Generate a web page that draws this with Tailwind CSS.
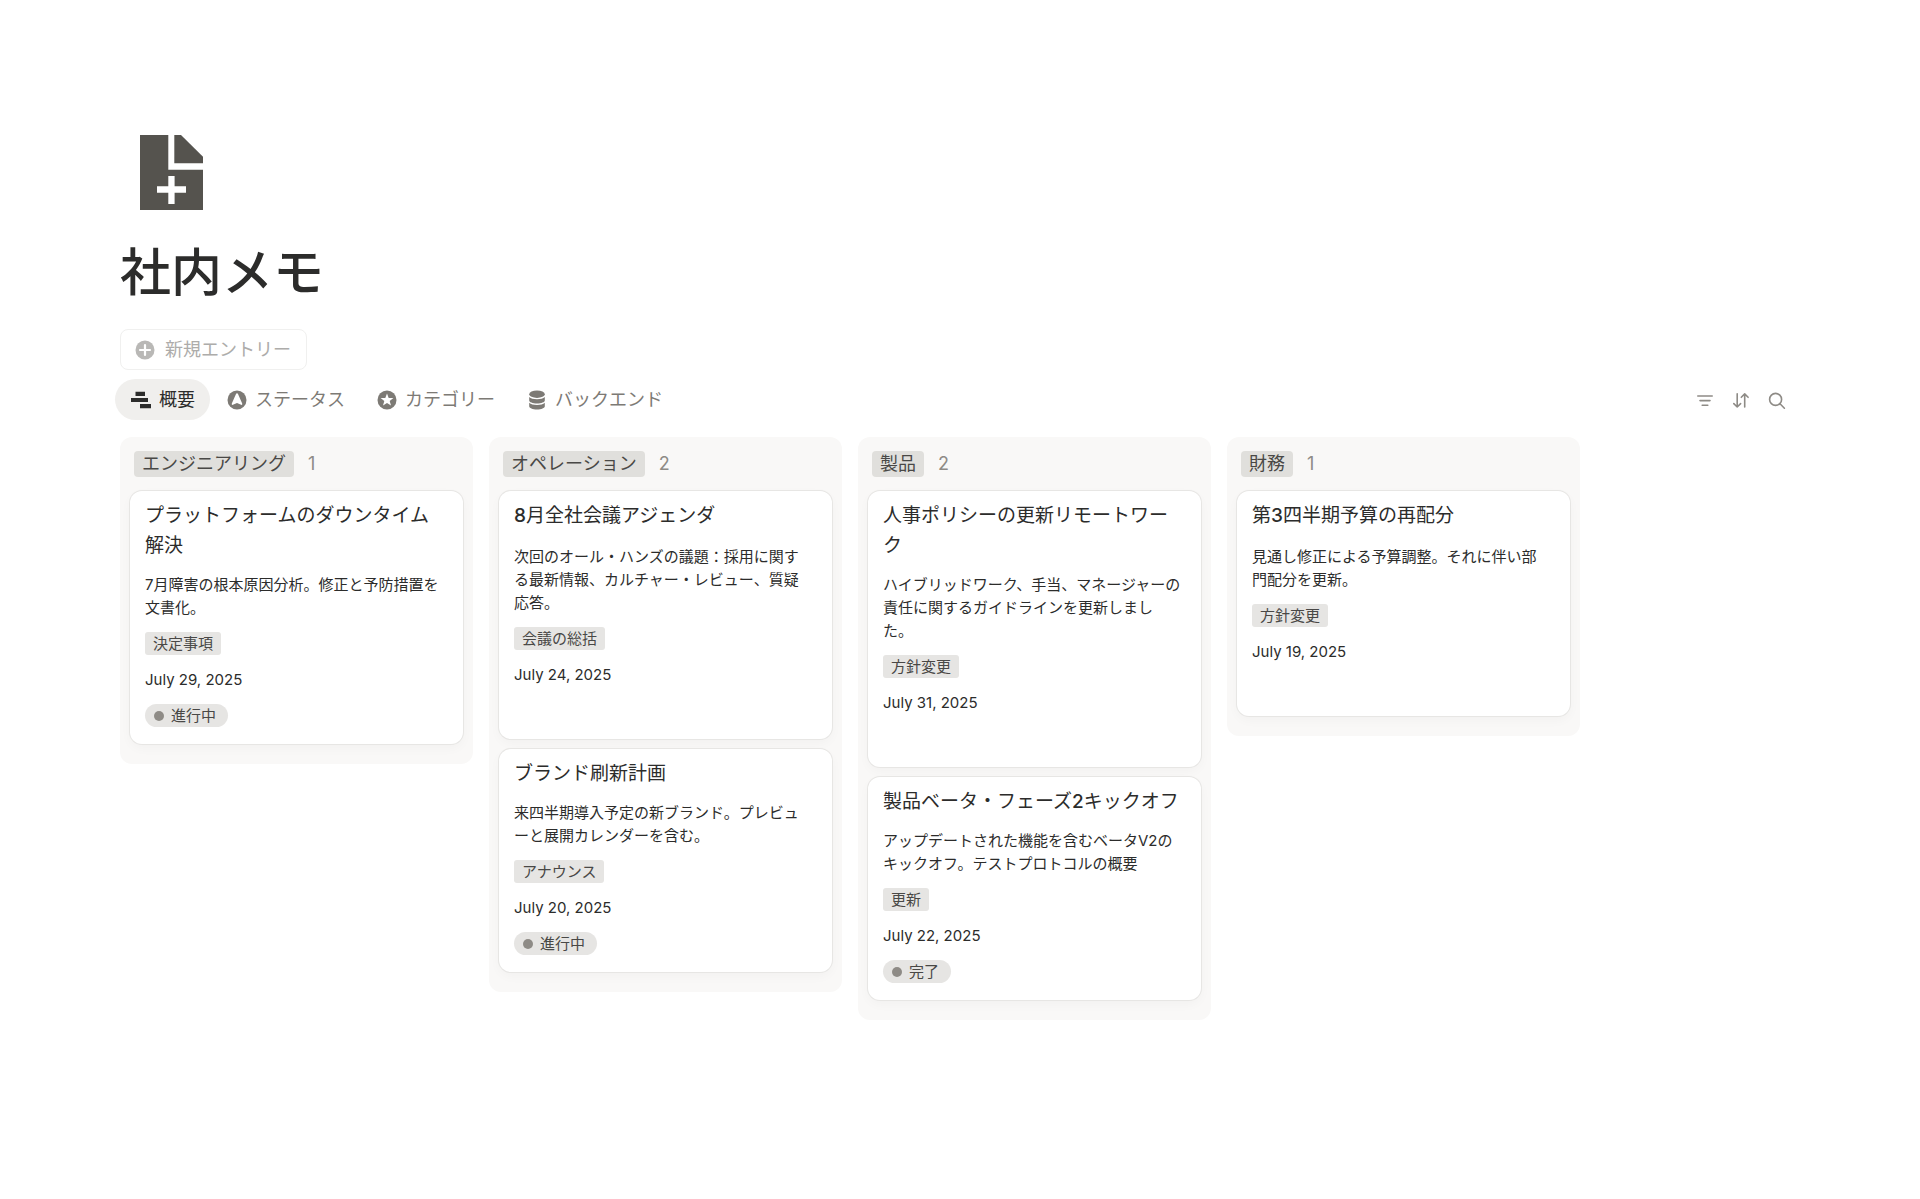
<!DOCTYPE html>
<html lang="ja">
<head>
    <meta charset="UTF-8">
    <meta name="viewport" content="width=device-width, initial-scale=1.0">
    <title>社内メモ</title>
    <script src="https://cdn.jsdelivr.net/npm/@tailwindcss/browser@4"></script>
</head>
<body class="bg-white text-[#2c2c2b] font-['Inter','Noto_Sans_CJK_JP',sans-serif]">
    <main class="px-[120px] pt-[135px] pb-20">
        <svg class="ml-5 w-[63px] h-[75px]" viewBox="0 0 63 75" fill="#55534e" aria-hidden="true">
            <path fill-rule="evenodd" d="M0 0H28.3V34.7H63V75H0ZM28.3 41V51.3H17V57.7H28.3V69H34.6V57.7H46V51.3H34.6V41Z"/>
            <path d="M34.3 0H41L63 21.7V28.3H34.3Z"/>
        </svg>

        <h1 class="mt-[33px] text-[51px] leading-[60px] font-medium">社内メモ</h1>

        <button type="button" class="mt-[26px] h-[41px] flex items-center gap-[10px] pl-[14px] pr-[15px] border border-[#f0f0ef] rounded-lg text-lg text-[#adacaa]">
            <svg class="size-5" viewBox="0 0 20 20" aria-hidden="true">
                <circle cx="10" cy="10" r="9.5" fill="#b9b8b6"/>
                <path d="M10 5V15M5 10H15" stroke="#fff" stroke-width="2.2" stroke-linecap="round"/>
            </svg>
            新規エントリー
        </button>

        <div class="mt-[9px] flex items-center justify-between">
            <nav class="-ml-[5px] flex gap-px text-lg text-[#7d7a75]">
                <a href="#" class="h-[41px] flex items-center gap-2 pl-4 pr-[15px] rounded-full bg-[#f0efed] text-[#2c2c2b]">
                    <svg class="size-5" viewBox="0 0 20 20" fill="currentColor" aria-hidden="true">
                        <path d="M4.5 1.8H14V6H4.5ZM0 8H17V12H0ZM9 14H20V18.2H9Z"/>
                    </svg>
                    概要
                </a>
                <a href="#" class="h-[41px] flex items-center gap-2 pl-4 pr-[15px] rounded-full">
                    <svg class="size-5" viewBox="0 0 20 20" aria-hidden="true">
                        <circle cx="10" cy="10" r="9.5" fill="currentColor"/>
                        <path d="M10 3.2Q10.7 3.2 11 4L15.2 13.6Q15.6 15.2 14.1 14.8L10 13.1L5.9 14.8Q4.4 15.2 4.8 13.6L9 4Q9.3 3.2 10 3.2Z" fill="#fff"/>
                    </svg>
                    ステータス
                </a>
                <a href="#" class="h-[41px] flex items-center gap-2 pl-4 pr-[15px] rounded-full">
                    <svg class="size-5" viewBox="0 0 20 20" aria-hidden="true">
                        <circle cx="10" cy="10" r="9.5" fill="currentColor"/>
                        <path d="M10 3.4L11.7 8H16.4L12.7 10.9L14 15.6L10 12.9L6 15.6L7.3 10.9L3.6 8H8.3Z" fill="#fff"/>
                    </svg>
                    カテゴリー
                </a>
                <a href="#" class="h-[41px] flex items-center gap-2 pl-4 pr-[15px] rounded-full">
                    <svg class="size-5" viewBox="0 0 20 20" fill="currentColor" aria-hidden="true">
                        <ellipse cx="10" cy="4.2" rx="7.8" ry="3.7"/>
                        <path d="M2.2 7Q4.6 9.2 10 9.2T17.8 7V10.6C17.8 12.2 14.4 13.6 10 13.6S2.2 12.2 2.2 10.6Z"/>
                        <path d="M2.2 12.8Q4.6 15 10 15T17.8 12.8V16.2C17.8 18 14.4 19.5 10 19.5S2.2 18 2.2 16.2Z"/>
                    </svg>
                    バックエンド
                </a>
            </nav>
            <div class="mr-[5px] mt-[3px] flex text-[#8e8b86]">
                <button type="button" aria-label="フィルター" class="size-9 flex items-center justify-center">
                    <svg class="size-5" viewBox="0 0 20 20" fill="none" stroke="currentColor" stroke-width="1.6" stroke-linecap="round" aria-hidden="true">
                        <path d="M2.8 5H17.2M5 9.6H15M7.2 14.2H12.8"/>
                    </svg>
                </button>
                <button type="button" aria-label="並べ替え" class="size-9 flex items-center justify-center">
                    <svg class="size-5" viewBox="0 0 20 20" fill="none" stroke="currentColor" stroke-width="1.6" stroke-linecap="round" stroke-linejoin="round" aria-hidden="true">
                        <path d="M6.2 2.8V16M2.8 12.6L6.2 16L9.6 12.6M13.7 16V2.9M10.3 6.3L13.7 2.9L17.1 6.3"/>
                    </svg>
                </button>
                <button type="button" aria-label="検索" class="size-9 flex items-center justify-center">
                    <svg class="size-5" viewBox="0 0 20 20" fill="none" stroke="currentColor" stroke-width="1.6" stroke-linecap="round" aria-hidden="true">
                        <circle cx="8.6" cy="8.4" r="6"/>
                        <path d="M13 12.8L17.4 17.2"/>
                    </svg>
                </button>
            </div>
        </div>

        <div class="mt-[17px] flex items-start gap-4">
            <!-- エンジニアリング -->
            <section class="w-[353px] shrink-0 rounded-xl bg-[#f9f8f7] px-[10px] pt-[14px] pb-5">
                <header class="pl-1 mb-[14px] flex items-center gap-[14px] text-lg leading-[26px]">
                    <h2 class="h-[26px] px-2 rounded bg-[#e0dfdc] text-[#494846]">エンジニアリング</h2>
                    <span class="text-[#8e8b86]">1</span>
                </header>
                <div class="flex flex-col gap-[10px]">
                    <article class="flex flex-col items-start gap-3 rounded-xl bg-white px-[15px] pt-[10px] pb-[17px] shadow-[0_0_0_1px_#e7e6e4,0_4px_12px_rgba(25,25,25,0.03)]">
                        <h3 class="text-[19px] leading-[30px]">プラットフォームのダウンタイム<br>解決</h3>
                        <p class="text-[15px] leading-[23px] whitespace-nowrap">7月障害の根本原因分析。修正と予防措置を<br>文書化。</p>
                        <span class="mt-px h-[23px] px-2 rounded-[3px] bg-[#e6e5e3] text-[15px] leading-[23px] text-[#494846]">決定事項</span>
                        <time class="mt-px h-[23px] text-[15px] leading-[23px]">July 29, 2025</time>
                        <span class="mt-px h-[23px] flex items-center gap-[7px] pl-[9px] pr-3 rounded-full bg-[#e6e5e3] text-[15px] leading-[23px] text-[#494846]"><i class="size-[10px] rounded-full bg-[#8e8b86]"></i>進行中</span>
                    </article>
                </div>
            </section>

            <!-- オペレーション -->
            <section class="w-[353px] shrink-0 rounded-xl bg-[#f9f8f7] px-[10px] pt-[14px] pb-5">
                <header class="pl-1 mb-[14px] flex items-center gap-[14px] text-lg leading-[26px]">
                    <h2 class="h-[26px] px-2 rounded bg-[#e0dfdc] text-[#494846]">オペレーション</h2>
                    <span class="text-[#8e8b86]">2</span>
                </header>
                <div class="flex flex-col gap-[10px]">
                    <article class="flex flex-col items-start gap-3 rounded-xl bg-white px-[15px] pt-[10px] pb-[17px] shadow-[0_0_0_1px_#e7e6e4,0_4px_12px_rgba(25,25,25,0.03)]">
                        <h3 class="min-h-8 text-[19px] leading-[30px]"><span class="font-medium">8</span>月全社会議アジェンダ</h3>
                        <p class="text-[15px] leading-[23px] whitespace-nowrap">次回のオール・ハンズの議題：採用に関す<br>る最新情報、カルチャー・レビュー、質疑<br>応答。</p>
                        <span class="mt-px h-[23px] px-2 rounded-[3px] bg-[#e6e5e3] text-[15px] leading-[23px] text-[#494846]">会議の総括</span>
                        <time class="mt-px h-[23px] text-[15px] leading-[23px]">July 24, 2025</time>
                        <span class="mt-px h-[23px]"></span>
                    </article>
                    <article class="flex flex-col items-start gap-3 rounded-xl bg-white px-[15px] pt-[10px] pb-[17px] shadow-[0_0_0_1px_#e7e6e4,0_4px_12px_rgba(25,25,25,0.03)]">
                        <h3 class="text-[19px] leading-[30px]">ブランド刷新計画</h3>
                        <p class="text-[15px] leading-[23px] whitespace-nowrap">来四半期導入予定の新ブランド。プレビュ<br>ーと展開カレンダーを含む。</p>
                        <span class="mt-px h-[23px] px-2 rounded-[3px] bg-[#e6e5e3] text-[15px] leading-[23px] text-[#494846]">アナウンス</span>
                        <time class="mt-px h-[23px] text-[15px] leading-[23px]">July 20, 2025</time>
                        <span class="mt-px h-[23px] flex items-center gap-[7px] pl-[9px] pr-3 rounded-full bg-[#e6e5e3] text-[15px] leading-[23px] text-[#494846]"><i class="size-[10px] rounded-full bg-[#8e8b86]"></i>進行中</span>
                    </article>
                </div>
            </section>

            <!-- 製品 -->
            <section class="w-[353px] shrink-0 rounded-xl bg-[#f9f8f7] px-[10px] pt-[14px] pb-5">
                <header class="pl-1 mb-[14px] flex items-center gap-[14px] text-lg leading-[26px]">
                    <h2 class="h-[26px] px-2 rounded bg-[#e0dfdc] text-[#494846]">製品</h2>
                    <span class="text-[#8e8b86]">2</span>
                </header>
                <div class="flex flex-col gap-[10px]">
                    <article class="flex flex-col items-start gap-3 rounded-xl bg-white px-[15px] pt-[10px] pb-[17px] shadow-[0_0_0_1px_#e7e6e4,0_4px_12px_rgba(25,25,25,0.03)]">
                        <h3 class="text-[19px] leading-[30px]">人事ポリシーの更新リモートワー<br>ク</h3>
                        <p class="text-[15px] leading-[23px] whitespace-nowrap">ハイブリッドワーク、手当、マネージャーの<br>責任に関するガイドラインを更新しまし<br>た。</p>
                        <span class="mt-px h-[23px] px-2 rounded-[3px] bg-[#e6e5e3] text-[15px] leading-[23px] text-[#494846]">方針変更</span>
                        <time class="mt-px h-[23px] text-[15px] leading-[23px]">July 31, 2025</time>
                        <span class="mt-px h-[23px]"></span>
                    </article>
                    <article class="flex flex-col items-start gap-3 rounded-xl bg-white px-[15px] pt-[10px] pb-[17px] shadow-[0_0_0_1px_#e7e6e4,0_4px_12px_rgba(25,25,25,0.03)]">
                        <h3 class="text-[19px] leading-[30px]">製品ベータ・フェーズ<span class="font-medium">2</span>キックオフ</h3>
                        <p class="text-[15px] leading-[23px] whitespace-nowrap">アップデートされた機能を含むベータV2の<br>キックオフ。テストプロトコルの概要</p>
                        <span class="mt-px h-[23px] px-2 rounded-[3px] bg-[#e6e5e3] text-[15px] leading-[23px] text-[#494846]">更新</span>
                        <time class="mt-px h-[23px] text-[15px] leading-[23px]">July 22, 2025</time>
                        <span class="mt-px h-[23px] flex items-center gap-[7px] pl-[9px] pr-3 rounded-full bg-[#e6e5e3] text-[15px] leading-[23px] text-[#494846]"><i class="size-[10px] rounded-full bg-[#8e8b86]"></i>完了</span>
                    </article>
                </div>
            </section>

            <!-- 財務 -->
            <section class="w-[353px] shrink-0 rounded-xl bg-[#f9f8f7] px-[10px] pt-[14px] pb-5">
                <header class="pl-1 mb-[14px] flex items-center gap-[14px] text-lg leading-[26px]">
                    <h2 class="h-[26px] px-2 rounded bg-[#e0dfdc] text-[#494846]">財務</h2>
                    <span class="text-[#8e8b86]">1</span>
                </header>
                <div class="flex flex-col gap-[10px]">
                    <article class="flex flex-col items-start gap-3 rounded-xl bg-white px-[15px] pt-[10px] pb-[17px] shadow-[0_0_0_1px_#e7e6e4,0_4px_12px_rgba(25,25,25,0.03)]">
                        <h3 class="min-h-8 text-[19px] leading-[30px]">第<span class="font-medium">3</span>四半期予算の再配分</h3>
                        <p class="text-[15px] leading-[23px] whitespace-nowrap">見通し修正による予算調整。それに伴い部<br>門配分を更新。</p>
                        <span class="mt-px h-[23px] px-2 rounded-[3px] bg-[#e6e5e3] text-[15px] leading-[23px] text-[#494846]">方針変更</span>
                        <time class="mt-px h-[23px] text-[15px] leading-[23px]">July 19, 2025</time>
                        <span class="mt-px h-[23px]"></span>
                    </article>
                </div>
            </section>
        </div>
    </main>
</body>
</html>
